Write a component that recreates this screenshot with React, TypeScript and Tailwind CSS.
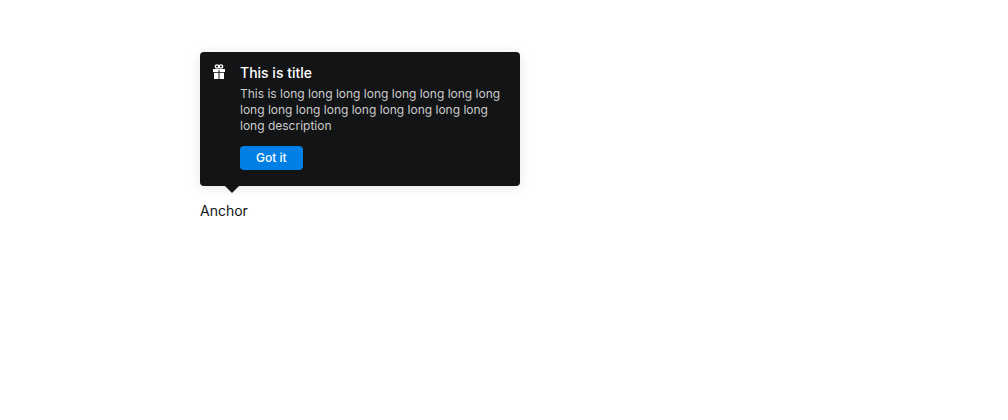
export default function App() {
  return (
    <main className="px-[200px] pt-[52px] font-['Inter',sans-serif] text-[#121416]">
      <div className="relative inline-block">
        <section role="dialog" aria-labelledby="tip-title" className="relative flex w-80 gap-3 rounded bg-[#121416] px-3 pt-3 pb-4 shadow-[0_2px_12px_rgba(0,0,0,0.10)]">
          <svg viewBox="0 0 16 16" className="size-4 shrink-0" fill="#fff" aria-hidden="true">
            <ellipse cx="5" cy="2.500" rx="1.700" ry="1.600" fill="none" stroke="#fff" strokeWidth="1.400" />
            <ellipse cx="9" cy="2.500" rx="1.700" ry="1.600" fill="none" stroke="#fff" strokeWidth="1.400" />
            <path d="M1 5H13V8H7.500V6H6.500V8H1ZM2 8.700H6.500V15H2ZM7.500 8.700H12V15H7.500Z" />
          </svg>
          <div className="min-w-0 flex-1">
            <h2 id="tip-title" className="text-sm leading-[18px] font-medium text-white">This is title</h2>
            <p className="mt-1 text-xs leading-4 text-[#cccccc]">
              This is long long long long long long long long long long long long long long long long long long description
            </p>
            <button type="button" className="mt-3 flex h-6 items-center rounded bg-[#0080e6] px-4 text-xs leading-4 font-medium text-white">Got it</button>
          </div>
          <svg viewBox="0 0 14 7" className="absolute top-full left-[25px] h-[7px] w-[14px]" fill="#121416" aria-hidden="true">
            <path d="M0 0H14L7 7Z" />
          </svg>
        </section>
        <p className="mt-4 text-sm leading-[18px]">Anchor</p>
      </div>
    </main>
  );
}
